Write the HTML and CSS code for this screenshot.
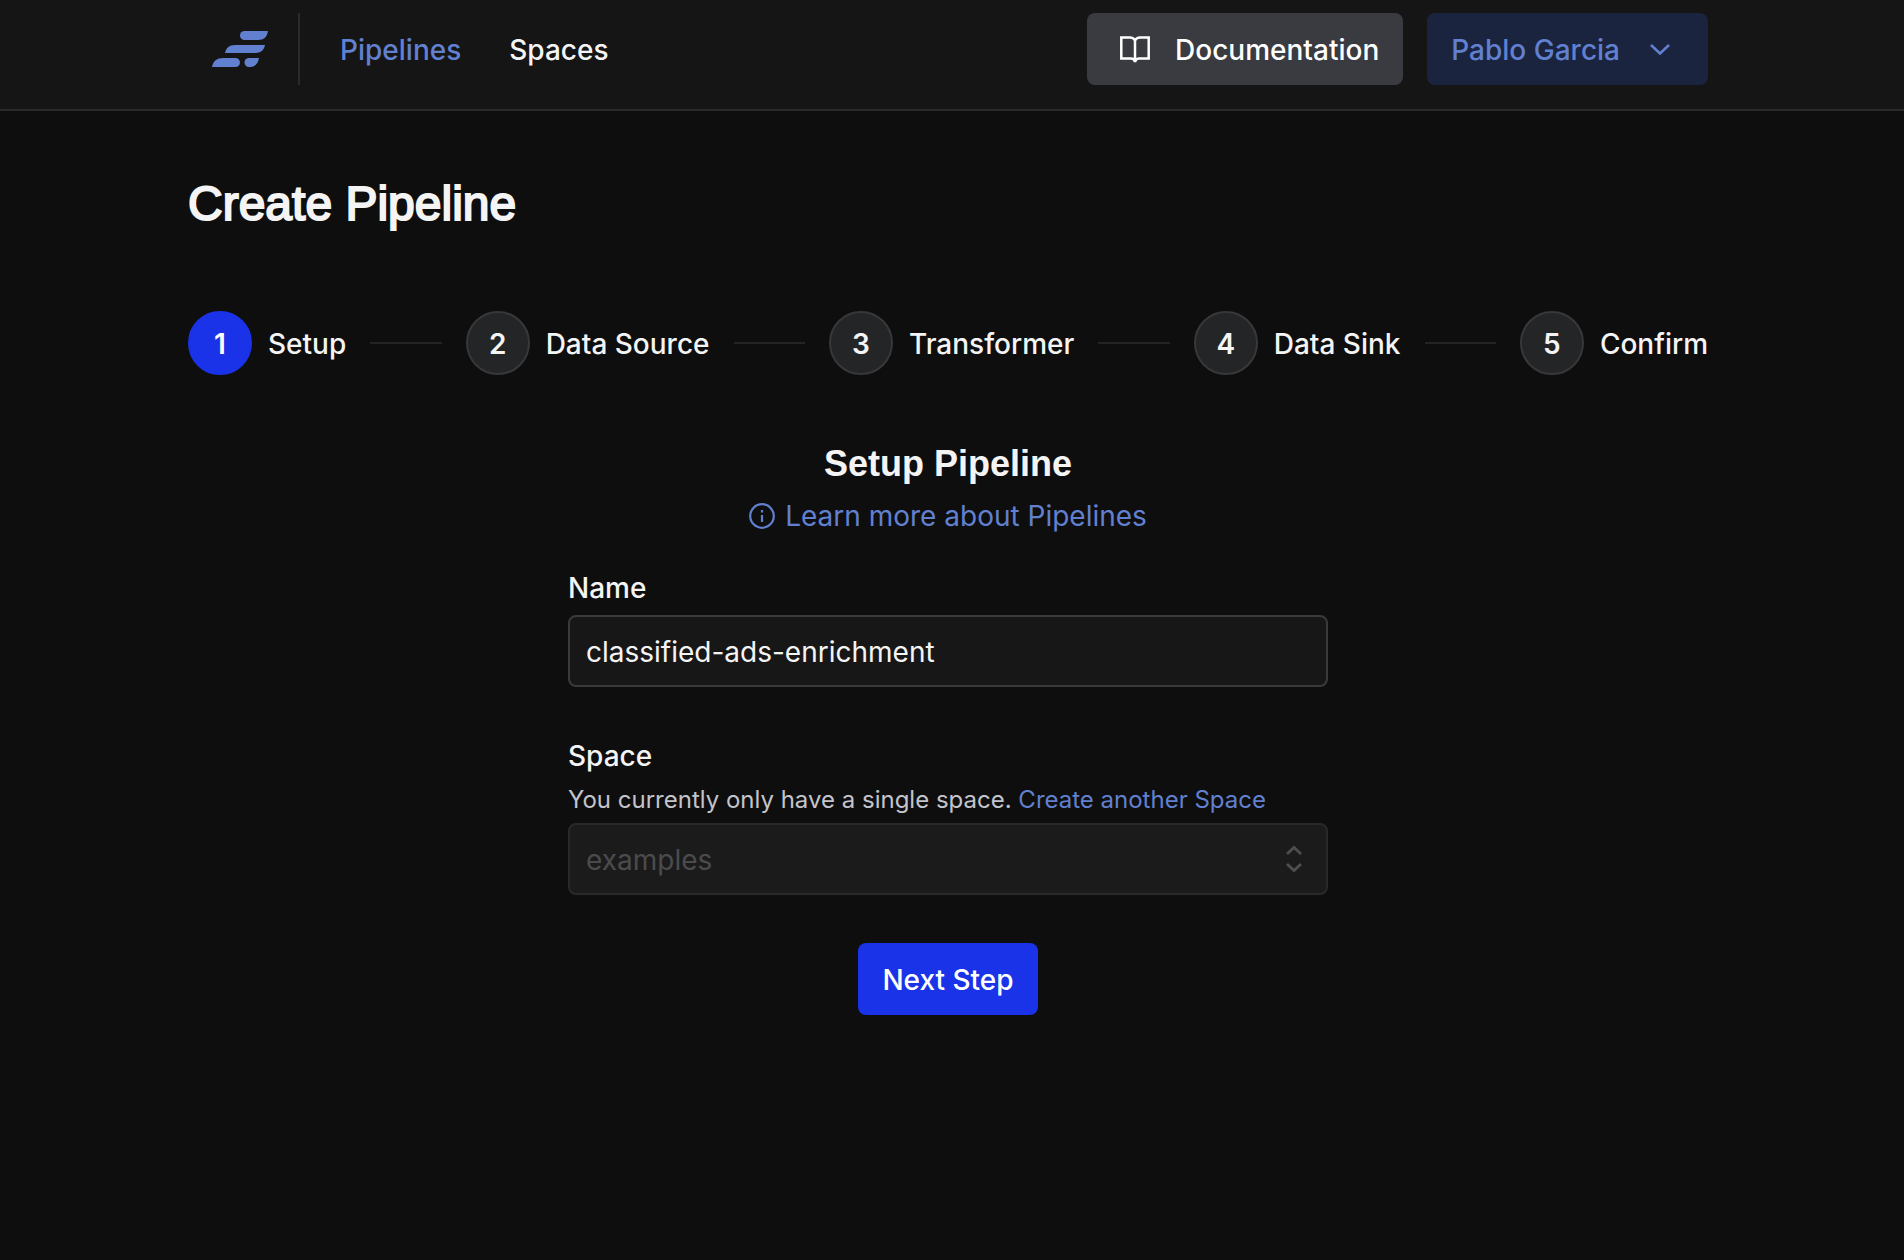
FILE: index.html
```html
<!DOCTYPE html>
<html lang="en">
<head>
<meta charset="utf-8">
<meta name="viewport" content="width=device-width, initial-scale=1">
<title>Create Pipeline</title>
<link rel="stylesheet" href="styles.css">
</head>
<body>
<header class="topbar">
  <div class="container topbar-inner">
    <a class="logo" href="#" aria-label="Home">
      <svg width="56" height="36" viewBox="0 0 56 36" fill="currentColor" aria-hidden="true">
        <path d="M32.500 0H56C55 6 52 9 46 9H32.500A4.500 4.500 0 0 1 32.500 0Z"/>
        <path d="M13 22C14 17 17 14 23 14H53C52 19 49 22 43 22Z"/>
        <path d="M0 36C1 30 5 27 11 27H23.500A4.500 4.500 0 0 1 23.500 36Z"/>
        <path d="M37 27H47C46 33 43 36 37 36A4.500 4.500 0 0 1 37 27Z"/>
      </svg>
    </a>
    <nav class="nav">
      <a class="nav-link nav-link-active" href="#">Pipelines</a>
      <a class="nav-link" href="#">Spaces</a>
    </nav>
    <div class="actions">
      <a class="button button-docs" href="#">
        <svg width="32" height="32" viewBox="0 0 32 32" fill="none" stroke="currentColor" stroke-width="2.500" aria-hidden="true"><path d="M16 6.500C15 4.500 13 3.500 11 3.500H2.300V24.500H12C14 24.500 15.500 25.500 16 28C16.500 25.500 18 24.500 20 24.500H29.700V3.500H21C19 3.500 17 4.500 16 6.500ZM16 6.500V28"/></svg>
        Documentation
      </a>
      <button class="button button-user" type="button">
        Pablo Garcia
        <svg width="32" height="32" viewBox="0 0 32 32" fill="none" stroke="currentColor" stroke-width="2.500" aria-hidden="true"><path d="M7 11 16 19.500 25 11"/></svg>
      </button>
    </div>
  </div>
</header>
<main class="container main">
  <h1 class="page-title">Create Pipeline</h1>
  <ol class="steps">
    <li class="step step-current" aria-current="step"><span class="step-number">1</span><span class="step-name">Setup</span></li>
    <li class="step"><span class="step-number">2</span><span class="step-name">Data Source</span></li>
    <li class="step"><span class="step-number">3</span><span class="step-name">Transformer</span></li>
    <li class="step"><span class="step-number">4</span><span class="step-name">Data Sink</span></li>
    <li class="step"><span class="step-number">5</span><span class="step-name">Confirm</span></li>
  </ol>
  <form class="form">
    <h2 class="form-title">Setup Pipeline</h2>
    <a class="learn-link" href="#">
      <svg width="26" height="26" viewBox="0 0 26 26" fill="none" stroke="currentColor" stroke-width="2.200" aria-hidden="true"><circle cx="13" cy="13" r="11.800"/><path d="M13 12V19M13 7V9.500"/></svg>
      Learn more about Pipelines
    </a>
    <div class="field">
      <label class="label" for="name">Name</label>
      <input class="control" id="name" type="text" value="classified-ads-enrichment">
    </div>
    <div class="field">
      <label class="label" for="space">Space</label>
      <p class="help">You currently only have a single space. <a href="#">Create another Space</a></p>
      <div class="select-wrap">
        <select class="control" id="space" disabled><option>examples</option></select>
        <svg class="select-icon" width="24" height="32" viewBox="0 0 24 32" fill="none" stroke="currentColor" stroke-width="2.800" aria-hidden="true"><path d="M5 11 12 4.500 19 11M5 21 12 27.500 19 21"/></svg>
      </div>
    </div>
    <button class="button button-primary" type="submit">Next Step</button>
  </form>
</main>
</body>
</html>
```

FILE: styles.css
```css
:root {
  --link: #6280d0;
  --text: #f4f4f5;
  --primary: #1a33e8;
  --gutter: 8px;
}
* { box-sizing: border-box; }
body {
  margin: 0;
  padding-right: var(--gutter);
  background: #0e0e0e;
  color: var(--text);
  font: 500 28px/40px Inter, "Liberation Sans", sans-serif;
}
a { color: var(--link); text-decoration: none; }
.container {
  width: 84%;
  max-width: 1520px;
  margin: 0 auto;
}
.topbar {
  margin-right: calc(-1 * var(--gutter));
  background: #151515;
  border-bottom: 2px solid #2a2a2b;
  padding: 13px var(--gutter) 24px 0;
}
.topbar-inner { display: flex; align-items: center; }
.logo {
  display: flex;
  align-items: center;
  height: 72px;
  padding: 0 30px 0 24px;
  border-right: 2px solid #2a2a2b;
}
.nav { display: flex; gap: 48px; padding: 2px 0 0 40px; }
.nav-link { color: var(--text); }
.nav-link-active { color: var(--link); }
.actions { display: flex; gap: 24px; margin-left: auto; }
.button {
  display: flex;
  align-items: center;
  height: 72px;
  padding: 2px 24px 0;
  border: 0;
  border-radius: 8px;
  color: #fff;
  font: inherit;
  white-space: nowrap;
}
.button-docs { gap: 24px; padding-left: 32px; background: #3a3a41; }
.button-user { gap: 24px; padding-right: 32px; background: #1a243e; color: var(--link); }
.button-primary { align-self: center; margin-top: 48px; background: var(--primary); }
.main { padding-top: 65px; }
.page-title {
  margin: 0;
  font: 500 48px/56px "Liberation Sans", sans-serif;
  -webkit-text-stroke: 2px currentColor;
}
.steps {
  display: flex;
  align-items: center;
  margin: 79px 0 0;
  padding: 0;
  list-style: none;
}
.step { display: flex; align-items: center; gap: 16px; white-space: nowrap; }
.step:not(:last-child) { flex: 1 1 auto; }
.step:not(:last-child)::after {
  content: "";
  flex: 1;
  height: 2px;
  margin: 0 24px 0 8px;
  background: #242426;
}
.step-name { padding-top: 2px; }
.step-number {
  display: grid;
  place-items: center;
  width: 64px;
  height: 64px;
  padding-top: 2px;
  border: 2px solid #38383a;
  border-radius: 50%;
  background: #242527;
  font-weight: 600;
}
.step-current .step-number { border-color: var(--primary); background: var(--primary); color: #fff; }
.form {
  display: flex;
  flex-direction: column;
  width: 50%;
  margin: 65px auto 0;
}
.form-title {
  margin: 0;
  text-align: center;
  font: 700 36px/48px "Liberation Sans", sans-serif;
}
.learn-link {
  display: flex;
  align-items: center;
  align-self: center;
  gap: 10px;
  margin-top: 8px;
  font-weight: 400;
}
.field { display: flex; flex-direction: column; margin-top: 48px; }
.learn-link + .field { margin-top: 32px; }
.label { padding-bottom: 7px; }
.field + .field { margin-top: 49px; }
.control {
  width: 100%;
  height: 72px;
  padding: 2px 16px 0;
  border: 2px solid #3a3a3b;
  border-radius: 8px;
  background: #171717;
  color: var(--text);
  font: inherit;
  font-weight: 400;
  appearance: none;
}
.control:disabled { border-color: #29292a; background: #1b1b1c; color: #4b4b4d; opacity: 1; }
.help { margin: 0; padding: 1px 0 7px; color: #c4c4cb; font-size: 24px; line-height: 32px; font-weight: 400; }
.select-wrap { position: relative; }
.select-icon { position: absolute; right: 22px; top: 20px; color: #4e4e50; pointer-events: none; }
```
